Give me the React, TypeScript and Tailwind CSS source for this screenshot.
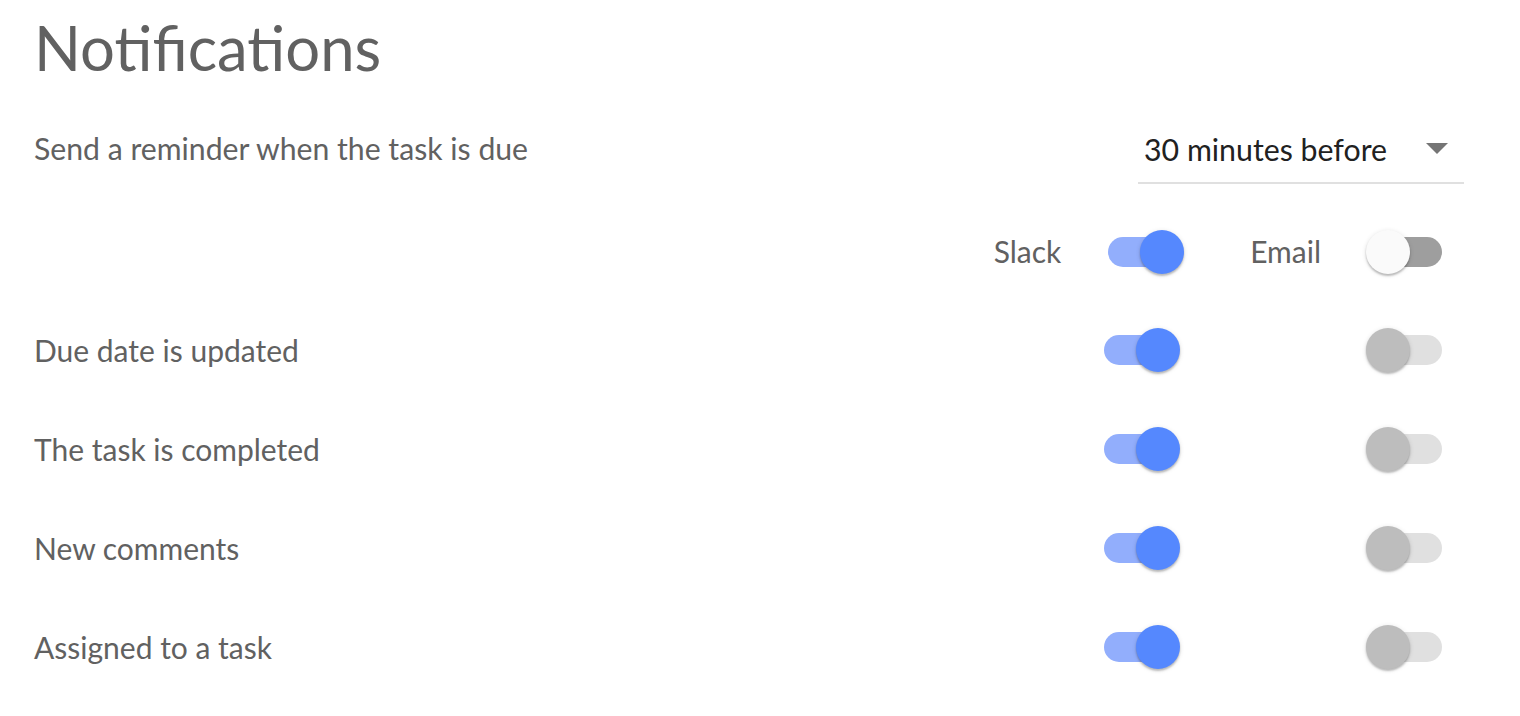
import React from "react";

type ToggleProps = { on: boolean; variant?: "active" | "disabled" };

function Toggle({ on, variant = "active" }: ToggleProps) {
  let track = "bg-[#92aefc]";
  let thumb = "bg-[#5588fe]";
  if (!on && variant === "active") {
    track = "bg-[#9e9e9e]";
    thumb = "bg-[#fafafa]";
  } else if (!on) {
    track = "bg-[#e0e0e0]";
    thumb = "bg-[#bdbdbd]";
  }
  return (
    <div className="relative w-[80px] h-[44px] shrink-0">
      <div className={`absolute left-[4px] right-[4px] top-[7px] h-[30px] rounded-full ${track}`} />
      <div
        className={`absolute top-0 w-[44px] h-[44px] rounded-full ${thumb} ${on ? "right-0" : "left-0"} shadow-[0_2px_2px_rgba(0,0,0,0.22),0_1px_5px_rgba(0,0,0,0.12)]`}
      />
    </div>
  );
}

const rows = ["Due date is updated", "The task is completed", "New comments", "Assigned to a task"];

export default function App() {
  return (
    <div
      className="w-full h-[716px] bg-white text-[#616161] flex flex-col pl-[34px] pt-[11px]"
      style={{ fontFamily: "Lato, 'Open Sans', sans-serif" }}
    >
      <h1 className="text-[61.6px] leading-[72px] font-normal">Notifications</h1>

      <div className="flex items-start justify-between mt-[35px] pr-[56px]">
        <div className="text-[30.2px] leading-[40px] pt-[10px]">Send a reminder when the task is due</div>
        <div className="w-[326px] flex items-center justify-between pt-[11px] pb-[13px] pl-[6px] pr-[16px] border-b-2 border-[#e0e0e0]">
          <span className="text-[30.3px] leading-[40px] text-[#212121]">30 minutes before</span>
          <svg width="22" height="11" viewBox="0 0 22 11" className="mb-[2px]">
            <path d="M0 0 L22 0 L11 11 Z" fill="#757575" />
          </svg>
        </div>
      </div>

      <div className="flex items-center justify-end mt-[46px] pr-[74px]">
        <span className="text-[30px] leading-[40px] pb-[3px]">Slack</span>
        <div className="ml-[43px] mr-[66px]">
          <Toggle on={true} />
        </div>
        <span className="text-[30px] leading-[40px] pb-[3px]">Email</span>
        <div className="ml-[45px]">
          <Toggle on={false} variant="active" />
        </div>
      </div>

      <div className="flex flex-col gap-[55px] mt-[54px] pr-[74px]">
        {rows.map((r) => (
          <div key={r} className="flex items-center">
            <span className="flex-1 text-[30px] leading-[40px]">{r}</span>
            <Toggle on={true} />
            <div className="ml-[186px]">
              <Toggle on={false} variant="disabled" />
            </div>
          </div>
        ))}
      </div>
    </div>
  );
}
